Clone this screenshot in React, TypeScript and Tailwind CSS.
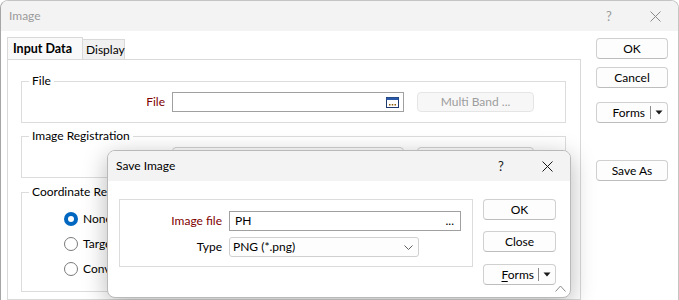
import React from "react";

const Btn = ({ children, className = "" }: { children: React.ReactNode; className?: string }) => (
  <div
    className={
      "h-[21px] flex items-center justify-center rounded-[4px] border border-[#d0d0d0] border-b-[#bdbdbd] bg-[#fdfdfd] text-[12px] text-black " +
      className
    }
  >
    {children}
  </div>
);

const CloseX = ({ color }: { color: string }) => (
  <svg width="11" height="11" viewBox="0 0 11 11">
    <path d="M0.5 0.5 L10.5 10.5 M10.5 0.5 L0.5 10.5" stroke={color} strokeWidth="1" />
  </svg>
);

const DownTri = () => (
  <svg width="8" height="5" viewBox="0 0 8 5">
    <path d="M0.5 0.5 L7.5 0.5 L4 4.5 Z" fill="#1a1a1a" />
  </svg>
);

const Radio = ({ checked }: { checked?: boolean }) =>
  checked ? (
    <div className="w-[14px] h-[14px] rounded-full bg-[#0067c0] flex items-center justify-center">
      <div className="w-[6px] h-[6px] rounded-full bg-white" />
    </div>
  ) : (
    <div className="w-[14px] h-[14px] rounded-full border border-[#7a7a7a] bg-white" />
  );

export default function App() {
  return (
    <div className="relative w-[679px] h-[300px] overflow-hidden bg-white text-[12px] leading-[16px] text-black font-['Lato',sans-serif]">
      {/* Main window */}
      <div className="h-full flex flex-col border-l border-t border-r border-[#c4c4c4] border-l-[#a6a6a6] rounded-t-[8px] overflow-hidden">
        {/* Title bar */}
        <div className="h-[30px] shrink-0 bg-[#f3f3f3] flex items-center">
          <span className="pl-[8px] text-[#9a9a9a]">Image</span>
          <div className="ml-auto flex h-full">
            <div className="w-[46px] flex items-center justify-center text-[#9a9a9a] text-[13px]">?</div>
            <div className="w-[46px] flex items-center justify-center">
              <CloseX color="#8a8a8a" />
            </div>
          </div>
        </div>
        {/* Body */}
        <div className="flex flex-1 bg-white">
          {/* Left: tabs */}
          <div className="pl-[6px] pt-[7px] w-[580px] flex flex-col">
            <div className="flex items-end h-[21px] relative z-10">
              <div className="h-[22px] w-[76px] border border-b-0 border-[#d9d9d9] bg-[#f9f9f9] font-bold text-[12.5px] pl-[5px] flex items-center">
                Input Data
              </div>
              <div className="h-[20px] w-[42px] border border-l-0 border-b-0 border-[#d9d9d9] bg-[#f0f0f0] pl-[3px] flex items-center">
                Display
              </div>
            </div>
            <div className="flex-1 border border-[#d9d9d9] pl-[13px] pr-[14px] pt-[13px]">
              {/* File group */}
              <fieldset className="border border-[#dcdcdc] pb-[10px]">
                <legend className="ml-[7px] px-[3px] leading-[16px]">File</legend>
                <div className="flex items-center pt-[3px]">
                  <div className="w-[143px] text-right text-[#800000]">File</div>
                  <div className="ml-[7px] w-[232px] h-[20px] border border-[#a0a0a0] bg-white flex items-center justify-end pr-[4px]">
                    <svg width="13" height="11" viewBox="0 0 13 11">
                      <rect x="0.5" y="0.5" width="12" height="10" fill="#ffffff" stroke="#1f3a6e" />
                      <rect x="0.5" y="0.5" width="12" height="2.5" fill="#2b5aa8" />
                      <rect x="3" y="7" width="1.5" height="1.5" fill="#8a5a00" />
                      <rect x="5.75" y="7" width="1.5" height="1.5" fill="#8a5a00" />
                      <rect x="8.5" y="7" width="1.5" height="1.5" fill="#8a5a00" />
                    </svg>
                  </div>
                  <div className="ml-[13px] w-[117px] h-[20px] rounded-[4px] border border-[#e5e5e5] bg-[#f7f7f7] text-[#9d9d9d] flex items-center justify-center">
                    Multi Band ...
                  </div>
                </div>
              </fieldset>
              {/* Image Registration group */}
              <fieldset className="mt-[5px] border border-[#dcdcdc] pb-[10px]">
                <legend className="ml-[7px] px-[3px] leading-[16px]">Image Registration</legend>
                <div className="flex items-center pt-[3px]">
                  <div className="w-[143px]" />
                  <div className="ml-[7px] w-[232px] h-[20px] rounded-[4px] border border-[#d0d0d0] bg-[#fdfdfd]" />
                  <div className="ml-[13px] w-[117px] h-[20px] rounded-[4px] border border-[#d0d0d0] bg-[#fdfdfd]" />
                </div>
              </fieldset>
              {/* Coordinate Reference group */}
              <fieldset className="mt-[6px] border border-[#dcdcdc] pb-[10px]">
                <legend className="ml-[7px] px-[3px] leading-[16px]">Coordinate Reference</legend>
                <div className="flex flex-col pt-[6px] pl-[42px]">
                  <div className="h-[25px] flex items-center gap-[5px]">
                    <Radio checked />
                    <span>None</span>
                  </div>
                  <div className="h-[25px] flex items-center gap-[5px]">
                    <Radio />
                    <span>Target</span>
                  </div>
                  <div className="h-[25px] flex items-center gap-[5px]">
                    <Radio />
                    <span>Convert</span>
                  </div>
                </div>
              </fieldset>
            </div>
          </div>
          {/* Right buttons */}
          <div className="pl-[15px] pt-[7px] flex flex-col">
            <Btn className="w-[72px]">OK</Btn>
            <Btn className="w-[72px] mt-[8px]">Cancel</Btn>
            <div className="w-[72px] mt-[14px] h-[21px] rounded-[4px] border border-[#d0d0d0] border-b-[#bdbdbd] bg-[#fdfdfd] flex items-center">
              <span className="ml-auto">Forms</span>
              <div className="ml-[5px] w-px h-[13px] bg-[#8a8a8a]" />
              <div className="w-[16px] flex items-center justify-center">
                <DownTri />
              </div>
            </div>
            <Btn className="w-[72px] mt-[37px]">Save As</Btn>
          </div>
        </div>
      </div>

      {/* Save Image dialog (overlay) */}
      <div className="absolute left-[107px] top-[150px] w-[464px] h-[148px] rounded-[8px] border border-[#b9b9b9] bg-white overflow-hidden shadow-[0_6px_24px_rgba(0,0,0,0.28)] flex flex-col">
        <div className="h-[30px] shrink-0 bg-[#f3f3f3] flex items-center">
          <span className="pl-[8px]">Save Image</span>
          <div className="ml-auto flex h-full">
            <div className="w-[46px] flex items-center justify-center text-[13px] text-[#1a1a1a]">?</div>
            <div className="w-[46px] flex items-center justify-center">
              <CloseX color="#1a1a1a" />
            </div>
          </div>
        </div>
        <div className="flex pl-[11px] pr-[14px] pt-[18px]">
          <div className="w-[354px] h-[68px] border border-[#dcdcdc] pt-[11px] flex flex-col">
            <div className="flex items-center h-[20px]">
              <div className="w-[102px] text-right text-[#800000]">Image file</div>
              <div className="ml-[7px] w-[232px] h-[20px] border border-[#a0a0a0] bg-white flex items-center pl-[5px] pr-[6px]">
                <span>PH</span>
                <span className="ml-auto leading-[10px]">...</span>
              </div>
            </div>
            <div className="flex items-center h-[20px] mt-[6px]">
              <div className="w-[102px] text-right">Type</div>
              <div className="ml-[7px] w-[190px] h-[20px] rounded-[3px] border border-[#d0d0d0] bg-[#fdfdfd] flex items-center pl-[3px] pr-[5px]">
                <span>PNG (*.png)</span>
                <svg className="ml-auto" width="9" height="5" viewBox="0 0 9 5">
                  <path d="M0.5 0.5 L4.5 4.5 L8.5 0.5" fill="none" stroke="#606060" strokeWidth="1" />
                </svg>
              </div>
            </div>
          </div>
          <div className="ml-[10px] flex flex-col">
            <Btn className="w-[73px] border-[#0067c0] border-b-[#0067c0]">OK</Btn>
            <Btn className="w-[73px] mt-[11px]">Close</Btn>
            <div className="w-[73px] mt-[12px] h-[21px] rounded-[4px] border border-[#d0d0d0] border-b-[#bdbdbd] bg-[#fdfdfd] flex items-center">
              <span className="ml-auto">
                <span className="underline underline-offset-2">F</span>orms
              </span>
              <div className="ml-[4px] w-px h-[13px] bg-[#8a8a8a]" />
              <div className="w-[16px] flex items-center justify-center">
                <DownTri />
              </div>
            </div>
          </div>
        </div>
        <svg className="absolute right-[4px] bottom-[5px]" width="11" height="7" viewBox="0 0 11 7">
          <path d="M0.5 6.5 L5.5 1 L10.5 6.5" fill="none" stroke="#8a8a8a" strokeWidth="1" />
        </svg>
      </div>
    </div>
  );
}
